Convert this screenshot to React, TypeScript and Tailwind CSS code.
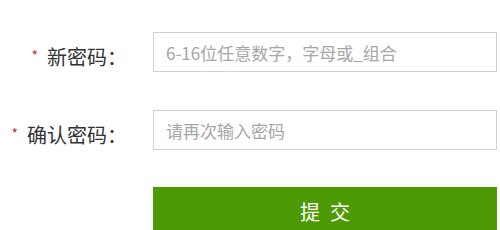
import React from "react";

const font = { fontFamily: '"Noto Sans CJK SC", "Noto Sans", sans-serif' };

const Row = ({ label, placeholder }: { label: string; placeholder: string }) => (
  <div className="flex items-center h-[40px]">
    <div className="w-[127px] flex justify-end items-start pt-[10px] text-[20px] leading-[20px] text-[#333]">
      <span className="text-[#c0303a] text-[14px] leading-[14px] mr-[9px] mt-[1px]">*</span>
      <span>{label}</span>
    </div>
    <input
      type="text"
      placeholder={placeholder}
      className="ml-[26px] w-[344px] h-[40px] border border-[#d0d0d0] bg-white px-[12px] text-[17px] text-[#333] placeholder:text-[#a6a6a6] outline-none"
      style={font}
    />
  </div>
);

export default function App() {
  return (
    <div className="w-[500px] h-[230px] bg-white overflow-hidden" style={font}>
      <div className="flex flex-col pt-[32px] gap-[38px]">
        <Row label="新密码：" placeholder="6-16位任意数字，字母或_组合" />
        <Row label="确认密码：" placeholder="请再次输入密码" />
        <div className="flex -mt-[1px]">
          <button className="ml-[153px] w-[344px] h-[46px] bg-[#4e9a06] text-white text-[20px] tracking-[10px] pl-[10px] pt-[4px]">
            提交
          </button>
        </div>
      </div>
    </div>
  );
}
